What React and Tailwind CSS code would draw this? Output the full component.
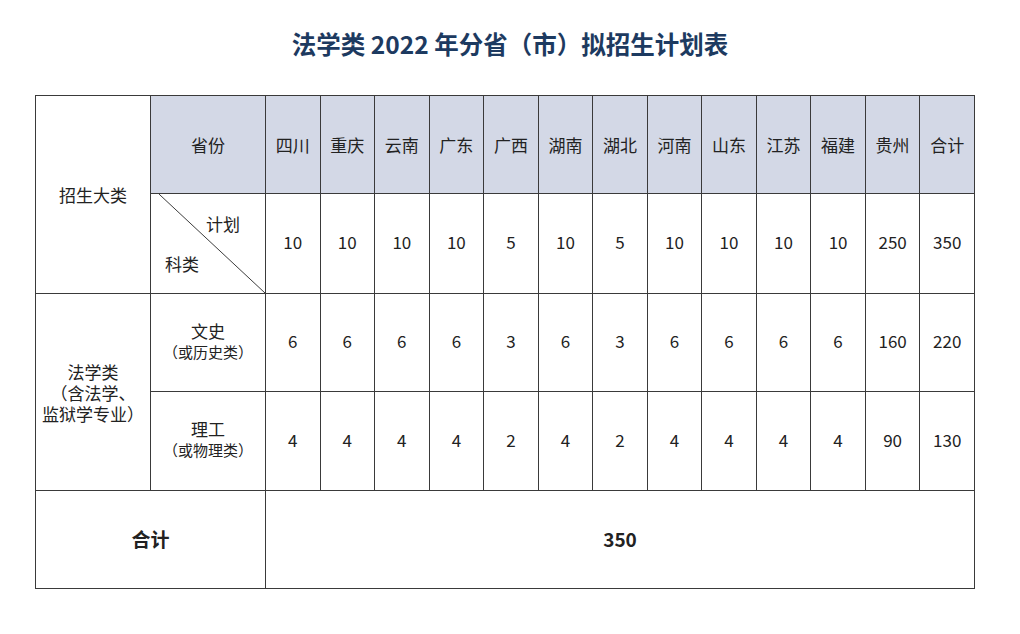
const provinces = ["四川", "重庆", "云南", "广东", "广西", "湖南", "湖北", "河南", "山东", "江苏", "福建", "贵州", "合计"];
const plan = ["10", "10", "10", "10", "5", "10", "5", "10", "10", "10", "10", "250", "350"];
const wenshi = ["6", "6", "6", "6", "3", "6", "3", "6", "6", "6", "6", "160", "220"];
const ligong = ["4", "4", "4", "4", "2", "4", "2", "4", "4", "4", "4", "90", "130"];

const font = { fontFamily: '"Noto Sans CJK SC", "Noto Sans", sans-serif' };

const cell = "border border-[#3a3a3a] text-center align-middle p-0";

const App = () => {
  return (
    <div className="w-[1020px] h-[634px] bg-white text-[#222]" style={font}>
      {/* Title */}
      <div className="pt-[27px] h-[95px] text-center text-[24.5px] leading-[34px] font-bold text-[#1d3a60]">
        法学类 2022 年分省（市）拟招生计划表
      </div>

      <table className="ml-[35px] w-[940px] table-fixed border-collapse text-[17px]">
        <colgroup>
          <col className="w-[115px]" />
          <col className="w-[115px]" />
          {provinces.map((p) => (
            <col key={p} />
          ))}
        </colgroup>
        <tbody>
          <tr className="h-[98px]">
            <td rowSpan={2} className={cell}>招生大类</td>
            <td className={`${cell} bg-[#d3d8e6]`}>省份</td>
            {provinces.map((p) => (
              <td key={p} className={`${cell} bg-[#d3d8e6]`}>{p}</td>
            ))}
          </tr>
          <tr className="h-[99px]">
            <td className={`${cell} relative`}>
              <svg className="absolute inset-0 w-full h-full" viewBox="0 0 115 99" preserveAspectRatio="none">
                <line x1="8" y1="0" x2="115" y2="99" stroke="#3a3a3a" strokeWidth="1" />
              </svg>
              <div className="relative h-[99px]">
                <span className="absolute left-[55px] top-[17px]">计划</span>
                <span className="absolute left-[14px] top-[57px]">科类</span>
              </div>
            </td>
            {plan.map((v, i) => (
              <td key={i} className={`${cell} pb-[3px]`}>{v}</td>
            ))}
          </tr>
          <tr className="h-[98px]">
            <td rowSpan={2} className={`${cell} leading-[21px]`}>
              <div>法学类</div>
              <div>（含法学、</div>
              <div>监狱学专业）</div>
            </td>
            <td className={`${cell} leading-[21px] pb-[4px]`}>
              <div>文史</div>
              <div className="text-[15px]">（或历史类）</div>
            </td>
            {wenshi.map((v, i) => (
              <td key={i} className={`${cell} pb-[3px]`}>{v}</td>
            ))}
          </tr>
          <tr className="h-[99px]">
            <td className={`${cell} leading-[21px] pb-[4px]`}>
              <div>理工</div>
              <div className="text-[15px]">（或物理类）</div>
            </td>
            {ligong.map((v, i) => (
              <td key={i} className={`${cell} pb-[3px]`}>{v}</td>
            ))}
          </tr>
          <tr className="h-[98px]">
            <td colSpan={2} className={`${cell} text-[19px] font-bold`}>合计</td>
            <td colSpan={13} className={`${cell} text-[19px] font-bold`}>350</td>
          </tr>
        </tbody>
      </table>
    </div>
  );
};

export default App;
